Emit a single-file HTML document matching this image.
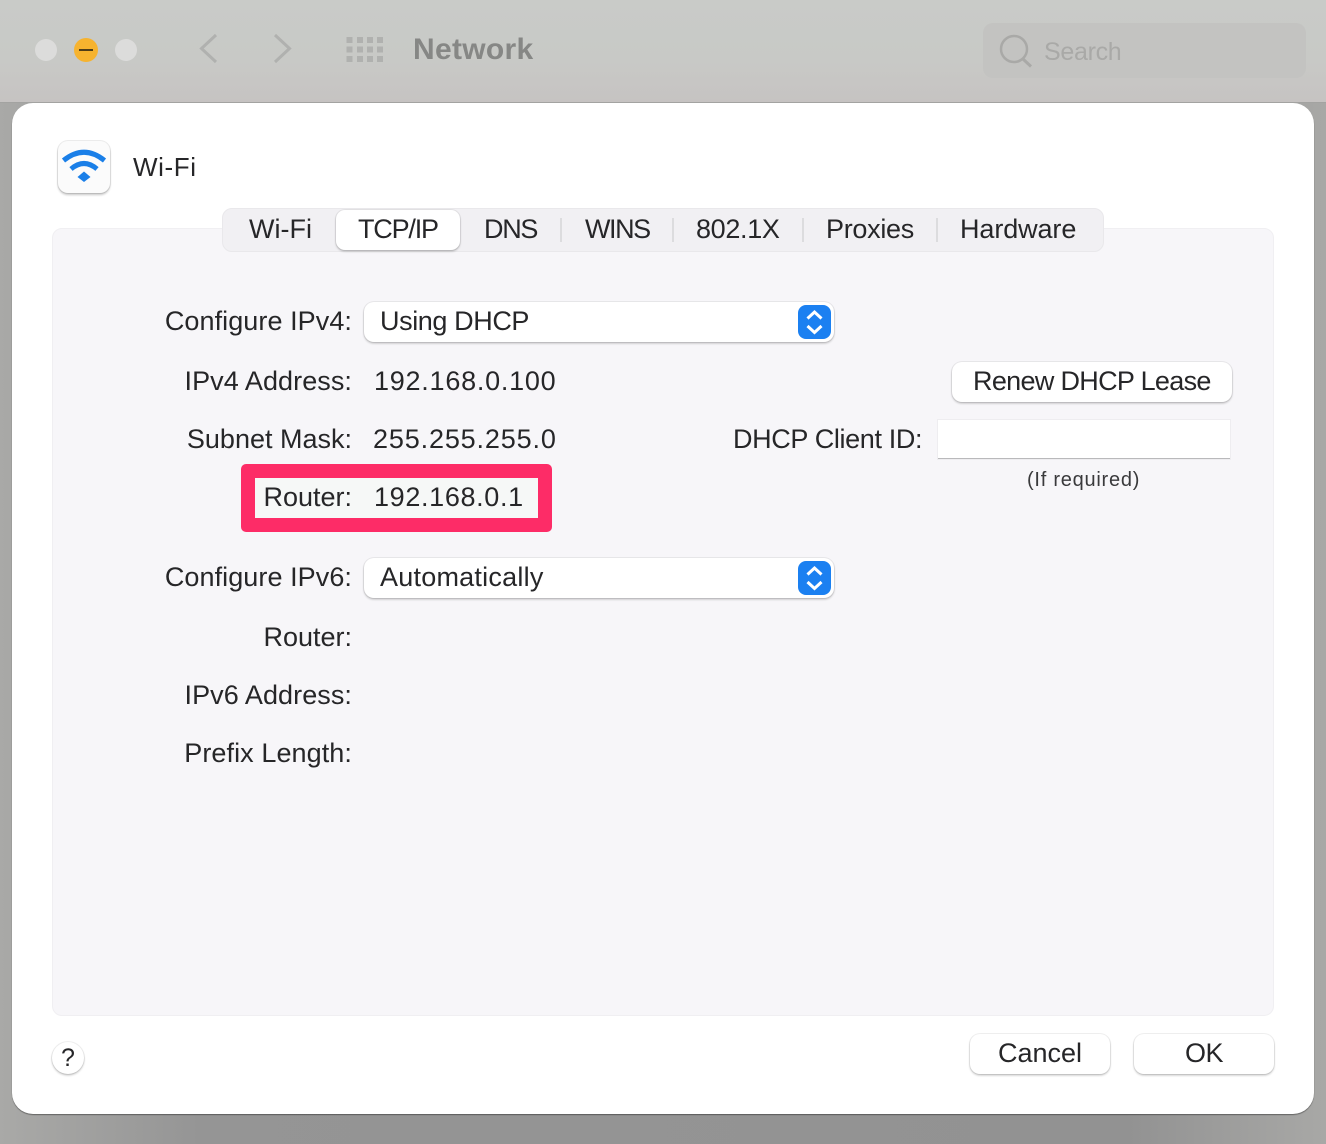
<!DOCTYPE html>
<html><head><meta charset="utf-8"><style>
html,body{margin:0;padding:0}
body{width:1326px;height:1144px;position:relative;overflow:hidden;background:#9a9a9a;font-family:"Liberation Sans",sans-serif;color:#262628}
.a{position:absolute}
.t{position:absolute;white-space:nowrap;font-size:27px;line-height:32px;height:32px}
.r{text-align:right;right:974px}
.btn{position:absolute;background:#fff;border-radius:10px;box-shadow:0 0 0 1px rgba(0,0,0,.06),0 1.5px 2px rgba(0,0,0,.22)}
.sep{position:absolute;top:218px;width:2px;height:24px;background:#dcdcde}
</style></head><body>
<div class="a" style="left:0;top:0;width:1326px;height:103px;background:linear-gradient(#c9cbc8 0,#c8c9c6 60%,#c6c3c2 100%);border-bottom:1px solid #a3a3a1;box-sizing:border-box"></div>
<div class="a" style="left:0;top:103px;width:1326px;height:1041px;background:linear-gradient(90deg,#a9a9a7 0,#959595 15%,#929292 85%,#a8a8a6 100%)"></div>
<div class="a" style="left:35px;top:39px;width:22px;height:22px;border-radius:50%;background:#dcdcdb"></div>
<div class="a" style="left:74px;top:38px;width:24px;height:24px;border-radius:50%;background:#f6b32f"></div>
<div class="a" style="left:79px;top:49px;width:14px;height:2px;background:#4d3c18"></div>
<div class="a" style="left:115px;top:39px;width:22px;height:22px;border-radius:50%;background:#dcdcdb"></div>
<svg class="a" style="left:190px;top:30px" width="110" height="36" fill="none" stroke="#b0b1af" stroke-width="3"><path d="M26 5 L11.500 18.500 L26 32"/><path d="M85 5 L99.500 18.500 L85 32"/></svg>
<svg class="a" style="left:346px;top:36px" width="38" height="28" fill="#b0b1af"><rect x="0.500" y="1" width="6" height="6"/><rect x="11" y="1" width="6" height="6"/><rect x="21" y="1" width="6" height="6"/><rect x="31" y="1" width="6" height="6"/><rect x="0.500" y="10.500" width="6" height="6"/><rect x="11" y="10.500" width="6" height="6"/><rect x="21" y="10.500" width="6" height="6"/><rect x="31" y="10.500" width="6" height="6"/><rect x="0.500" y="20" width="6" height="6"/><rect x="11" y="20" width="6" height="6"/><rect x="21" y="20" width="6" height="6"/><rect x="31" y="20" width="6" height="6"/></svg>
<div class="t" style="left:413px;top:34px;font-size:30px;font-weight:bold;color:#868785;letter-spacing:.3px">Network</div>
<div class="a" style="left:983px;top:23px;width:323px;height:55px;border-radius:10px;background:#c3c3c1"></div>
<svg class="a" style="left:998px;top:32px" width="36" height="36" fill="none" stroke="#a9a9a7" stroke-width="2.500"><circle cx="16" cy="17" r="13"/><path d="M25 27 L33 34.500" stroke-width="3"/></svg>
<div class="t" style="left:1044px;top:36px;font-size:25px;color:#a9a9a7;letter-spacing:-.3px">Search</div>

<div class="a" style="left:12px;top:103px;width:1302px;height:1011px;border-radius:21px;background:#fff;box-shadow:0 1px 1px rgba(0,0,0,.4)"></div>

<div class="a" style="left:58px;top:141px;width:52px;height:52px;border-radius:10px;background:#fbfbfb;box-shadow:0 0 0 1px rgba(0,0,0,.08),0 2px 2px rgba(0,0,0,.22)"></div>
<svg class="a" style="left:58px;top:141px" width="52" height="52" fill="none" stroke="#1a7fe8" stroke-width="5"><path d="M5.500 19.500 Q26 3 46.500 19.500"/><path d="M13 28 Q26 17 39 28"/><path d="M19.500 36 L26 30.500 L32.500 36 L26 41 Z" fill="#1a7fe8" stroke="none"/></svg>
<div class="t" style="left:133px;top:151px;font-size:26px;letter-spacing:.6px">Wi-Fi</div>

<div class="a" style="left:52px;top:228px;width:1222px;height:788px;box-sizing:border-box;border-radius:10px;background:#f7f6f9;border:1px solid #f0eff2"></div>

<div class="a" style="left:222px;top:208px;width:882px;height:44px;box-sizing:border-box;border-radius:10px;background:#f1f0f3;border:1px solid #e9e8eb"></div>
<div class="btn" style="left:336px;top:210px;width:124px;height:40px;border-radius:9px"></div>
<div class="sep" style="left:560px"></div><div class="sep" style="left:672px"></div><div class="sep" style="left:802px"></div><div class="sep" style="left:936px"></div>
<div class="t" style="left:249px;top:213px">Wi-Fi</div>
<div class="t" style="left:358px;top:213px;letter-spacing:-1.200px">TCP/IP</div>
<div class="t" style="left:484px;top:213px;letter-spacing:-1.300px">DNS</div>
<div class="t" style="left:585px;top:213px;letter-spacing:-1.450px">WINS</div>
<div class="t" style="left:696px;top:213px;letter-spacing:-.33px">802.1X</div>
<div class="t" style="left:826px;top:213px;letter-spacing:-.3px">Proxies</div>
<div class="t" style="left:960px;top:213px;letter-spacing:-.1px">Hardware</div>

<div class="t r" style="top:305px;letter-spacing:.07px">Configure IPv4:</div>
<div class="btn" style="left:364px;top:302px;width:470px;height:40px"></div>
<div class="t" style="left:380px;top:305px;letter-spacing:-.4px">Using DHCP</div>
<div class="a" style="left:798px;top:305px;width:33px;height:34px;border-radius:8px;background:#1b80f1"></div>
<svg class="a" style="left:798px;top:305px" width="33" height="34" fill="none" stroke="#fff" stroke-width="3"><path d="M9.500 13.500 L16.500 7 L23.500 13.500"/><path d="M9.500 21 L16.500 27.500 L23.500 21"/></svg>

<div class="t r" style="top:365px;letter-spacing:.07px">IPv4 Address:</div>
<div class="t" style="left:374px;top:365px;letter-spacing:.75px">192.168.0.100</div>
<div class="btn" style="left:952px;top:362px;width:280px;height:40px"></div>
<div class="t" style="left:973px;top:365px;letter-spacing:-.68px">Renew DHCP Lease</div>

<div class="t r" style="top:423px">Subnet Mask:</div>
<div class="t" style="left:373px;top:423px;letter-spacing:.85px">255.255.255.0</div>
<div class="t" style="left:733px;top:423px;letter-spacing:-.36px">DHCP Client ID:</div>
<div class="a" style="left:938px;top:420px;width:292px;height:39px;box-sizing:border-box;background:#fff;border-bottom:1px solid #b9b9bb;box-shadow:0 0 0 1px #eeedf0"></div>
<div class="t" style="left:1027px;top:464px;font-size:20px;color:#3a3a3c;letter-spacing:.75px">(If required)</div>

<div class="a" style="left:241px;top:464px;width:311px;height:68px;box-sizing:border-box;border:14px solid #fd2c67;border-radius:5px;background:#f6f8f7"></div>
<div class="t r" style="top:481px">Router:</div>
<div class="t" style="left:374px;top:481px;letter-spacing:.65px">192.168.0.1</div>

<div class="t r" style="top:561px;letter-spacing:.07px">Configure IPv6:</div>
<div class="btn" style="left:364px;top:558px;width:470px;height:40px"></div>
<div class="t" style="left:380px;top:561px;letter-spacing:.23px">Automatically</div>
<div class="a" style="left:798px;top:561px;width:33px;height:34px;border-radius:8px;background:#1b80f1"></div>
<svg class="a" style="left:798px;top:561px" width="33" height="34" fill="none" stroke="#fff" stroke-width="3"><path d="M9.500 13.500 L16.500 7 L23.500 13.500"/><path d="M9.500 21 L16.500 27.500 L23.500 21"/></svg>

<div class="t r" style="top:621px">Router:</div>
<div class="t r" style="top:679px;letter-spacing:.07px">IPv6 Address:</div>
<div class="t r" style="top:737px;letter-spacing:.08px">Prefix Length:</div>

<div class="btn" style="left:52px;top:1042px;width:32px;height:32px;border-radius:50%"></div>
<div class="t" style="left:52px;top:1042px;width:32px;text-align:center;font-size:25px;font-weight:500">?</div>
<div class="btn" style="left:970px;top:1034px;width:140px;height:40px"></div>
<div class="t" style="left:970px;top:1037px;width:140px;text-align:center">Cancel</div>
<div class="btn" style="left:1134px;top:1034px;width:140px;height:40px"></div>
<div class="t" style="left:1134px;top:1037px;width:140px;text-align:center;letter-spacing:-.5px">OK</div>
</body></html>
